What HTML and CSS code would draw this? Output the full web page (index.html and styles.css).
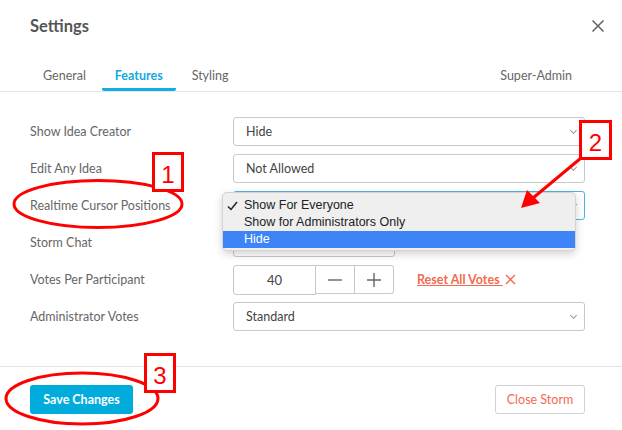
FILE: index.html
```html
<!DOCTYPE html>
<html>
<head>
<meta charset="utf-8">
<link rel="stylesheet" href="styles.css">
</head>
<body>
<div class="modal">
  <div class="header">
    <div class="title">Settings</div>
    <svg class="close" width="14" height="14" viewBox="0 0 14 14"><path d="M1.5 1.5 L12.5 12.5 M12.5 1.5 L1.5 12.5" stroke="#666" stroke-width="1.6" fill="none"/></svg>
  </div>
  <div class="tabs">
    <div class="tab">General</div>
    <div class="tab active">Features</div>
    <div class="tab">Styling</div>
    <div class="tab right">Super-Admin</div>
  </div>
  <div class="form">
    <div class="row"><div class="label">Show Idea Creator</div><div class="select">Hide<span class="chev"></span></div></div>
    <div class="row"><div class="label">Edit Any Idea</div><div class="select">Not Allowed<span class="chev"></span></div></div>
    <div class="row"><div class="label">Realtime Cursor Positions</div>
      <div class="select focus"><span class="chev"></span>
        <div class="menu">
          <div class="item"><svg class="check" width="11" height="10" viewBox="0 0 11 10"><path d="M1 5.5 L4 8.5 L10 1" stroke="#222" stroke-width="1.5" fill="none"/></svg>Show For Everyone</div>
          <div class="item">Show for Administrators Only</div>
          <div class="item sel">Hide</div>
        </div>
      </div>
    </div>
    <div class="row"><div class="label">Storm Chat</div><div class="select short"></div></div>
    <div class="row"><div class="label">Votes Per Participant</div>
      <div class="votes">
        <div class="num">40</div>
        <div class="step"><svg width="14" height="14" viewBox="0 0 14 14"><path d="M0 7 H14" stroke="#666" stroke-width="1.4"/></svg></div>
        <div class="step last"><svg width="14" height="14" viewBox="0 0 14 14"><path d="M0 7 H14 M7 0 V14" stroke="#666" stroke-width="1.4"/></svg></div>
        <a class="reset">Reset All Votes </a>
        <svg class="resetx" width="11" height="11" viewBox="0 0 11 11"><path d="M1 1 L10 10 M10 1 L1 10" stroke="#f26a4f" stroke-width="1.4" fill="none"/></svg>
      </div>
    </div>
    <div class="row"><div class="label">Administrator Votes</div><div class="select">Standard<span class="chev"></span></div></div>
  </div>
  <div class="footer">
    <button class="save">Save Changes</button>
    <button class="closestorm">Close Storm</button>
  </div>
</div>
<svg class="annot" width="622" height="430" viewBox="0 0 622 430">
  <ellipse cx="98" cy="204" rx="84" ry="23.5" fill="none" stroke="#f00" stroke-width="3"/>
  <ellipse cx="82" cy="398.5" rx="76" ry="25.5" fill="none" stroke="#f00" stroke-width="3"/>
  <rect x="153.5" y="153.5" width="29" height="37" fill="#fff" stroke="#f00" stroke-width="3"/>
  <text x="168" y="183" class="num-t">1</text>
  <rect x="580.5" y="121.5" width="30" height="37" fill="#fff" stroke="#f00" stroke-width="3"/>
  <text x="595.5" y="151" class="num-t">2</text>
  <rect x="145.5" y="354.5" width="29" height="37" fill="#fff" stroke="#f00" stroke-width="3"/>
  <text x="160" y="384" class="num-t">3</text>
  <path d="M581 158 L533 198" stroke="#f00" stroke-width="3" fill="none"/>
  <path d="M521 208 L527 190 L540 203 Z" fill="#f00"/>
</svg>
</body>
</html>
```
FILE: styles.css
```css
html, body { margin: 0; padding: 0; background: #fff; }
body { width: 622px; height: 430px; overflow: hidden; position: relative; font-family: "Lato", "Liberation Sans", sans-serif; }
.modal { width: 622px; }
.header { display: flex; justify-content: space-between; align-items: flex-start; padding: 15px 17px 0 30px; height: 42px; box-sizing: border-box; }
.title { font-size: 16.5px; font-weight: 700; color: #555; line-height: 22px; }
.close { margin-top: 4px; }
.tabs { display: flex; margin-top: 20px; padding: 0 37px 0 30px; border-bottom: 1px solid #e6e6e6; height: 30px; box-sizing: border-box; }
.tab { padding: 0 13px; font-size: 12.5px; color: #666; line-height: 27px; margin-right: 3px; border-bottom: 3px solid transparent; }
.tab.active { color: #12a9df; font-weight: 700; border-bottom-color: #10aee3; border-radius: 2px; }
.tab.right { margin-left: auto; margin-right: 0; }
.form { padding: 25px 37px 0 30px; display: flex; flex-direction: column; gap: 8px; height: 274px; box-sizing: border-box; }
.row { display: flex; align-items: center; height: 29px; }
.label { width: 203px; font-size: 12.5px; color: #666; }
.select { position: relative; width: 352px; height: 29px; box-sizing: border-box; border: 1px solid #c9c9c9; border-radius: 3px; padding-left: 12px; font-size: 12.5px; color: #444; line-height: 27px; }
.select.focus { border-color: #4cb4e4; }
.select.short { width: 162px; }
.chev { position: absolute; right: 8px; top: 10px; width: 4px; height: 4px; border-right: 1px solid #999; border-bottom: 1px solid #999; transform: rotate(45deg); }
.menu { position: absolute; left: -12px; top: 0; width: 354px; height: 59px; box-sizing: border-box; background: #efefef; border: 1px solid #d3d3d3; border-radius: 5px; padding: 4px 0; box-shadow: 0 3px 8px rgba(0,0,0,0.18); font-family: "Liberation Sans", sans-serif; z-index: 2; }
.item { position: relative; height: 17px; line-height: 17px; padding-left: 21px; font-size: 12.5px; color: #222; }
.item.sel { background: #3d85f6; color: #fff; }
.check { position: absolute; left: 4px; top: 4px; }
.votes { display: flex; align-items: center; height: 29px; }
.num { width: 83px; height: 30px; box-sizing: border-box; border: 1px solid #c9c9c9; border-radius: 3px 0 0 3px; text-align: center; line-height: 28px; font-size: 13px; color: #444; margin-top: 1px; }
.step { width: 39px; height: 29px; box-sizing: border-box; border: 1px solid #c9c9c9; border-left: none; display: flex; align-items: center; justify-content: center; }
.step.last { border-radius: 0 3px 3px 0; }
.reset { margin-left: 23px; color: #f26a4f; font-weight: 700; font-size: 12.5px; text-decoration: underline; white-space: pre; }
.resetx { margin-left: 2px; }
.footer { border-top: 1px solid #dfe3e8; display: flex; justify-content: space-between; align-items: flex-start; padding: 18px 37px 0 30px; height: 64px; box-sizing: border-box; }
button { font-family: "Lato", "Liberation Sans", sans-serif; font-size: 12.5px; height: 29px; border-radius: 3px; cursor: pointer; }
.save { width: 103px; background: #00acdc; color: #fff; border: none; font-weight: 700; }
.closestorm { width: 90px; background: #fff; color: #f26a4f; border: 1px solid #d2d2d2; }
.annot { position: absolute; left: 0; top: 0; z-index: 5; pointer-events: none; }
.num-t { font-family: "Liberation Sans", sans-serif; font-size: 24px; fill: #f00; text-anchor: middle; }
```
